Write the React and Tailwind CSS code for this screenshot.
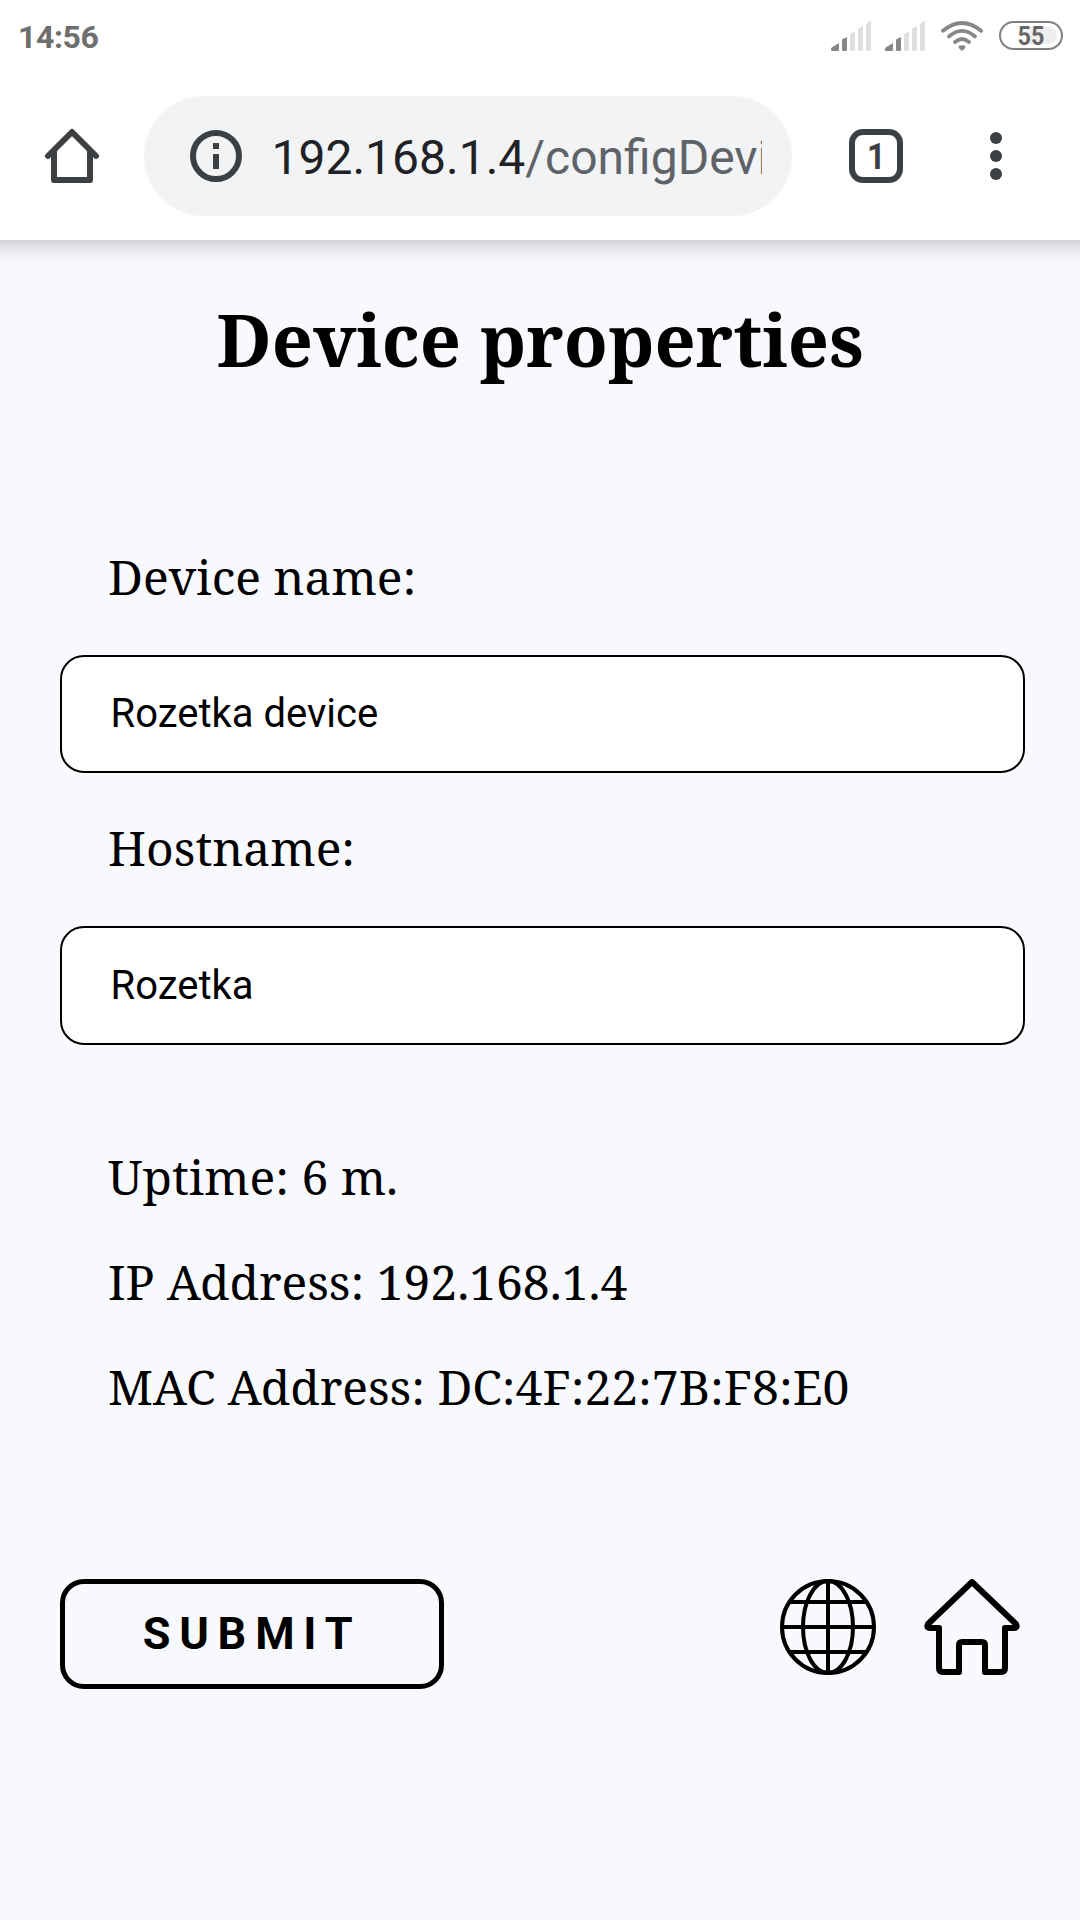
const serif = "font-['Noto_Serif','Droid_Serif','DejaVu_Serif',serif]";

function Signal() {
  return (
    <svg className="h-[30px] w-[41px]" viewBox="0 0 41 30">
      <path d="M0 29V27L8 22V29Q8 30 7 30H1Q0 30 0 29Z" fill="#878787" />
      <path d="M11 18.500L16 16V29Q16 30 15 30H12Q11 30 11 29Z" fill="#878787" />
      <path d="M19 13L24 10.500V29Q24 30 23 30H20Q19 30 19 29Z" fill="#dfdfdf" />
      <path d="M27 8L32 5V29Q32 30 31 30H28Q27 30 27 29Z" fill="#dfdfdf" />
      <path d="M35 3.500Q36 1 40 0V29Q40 30 39 30H36Q35 30 35 29Z" fill="#dfdfdf" />
    </svg>
  );
}

function Wifi() {
  return (
    <svg className="h-[30px] w-[42px]" viewBox="0 0 42 30" fill="none" stroke="#878787" strokeWidth="3.800" strokeLinecap="round">
      <path d="M2 9.800Q21 -5.800 40 9.800" />
      <path d="M8 15.500Q21 4.300 34 15.500" />
      <path d="M14 21Q21 14.800 28 21" />
      <path d="M17.200 25.500Q21 22.800 24.800 25.500Q24 28 21 30Q18 28 17.200 25.500Z" fill="#878787" stroke="none" />
    </svg>
  );
}

function StatusBar() {
  return (
    <div className="flex h-[72px] items-start justify-between pl-[18px] pr-[17px] font-[Roboto,sans-serif]">
      <span className="pt-[18px] text-[32px] leading-[38px] font-bold tracking-[-0.4px] text-[#6e6e6e]">14:56</span>
      <div className="flex pt-[21px]">
        <Signal />
        <div className="w-[13px]" />
        <Signal />
        <div className="w-[15px]" />
        <Wifi />
        <div className="w-[16px]" />
        <div className="relative flex h-[29px] w-[64px] items-center justify-center rounded-full border-2 border-[#808080]">
          <div className="absolute top-[4px] right-[4px] bottom-[4px] left-[4px] rounded-full bg-gradient-to-r from-white from-40% to-[#eeeeee] to-40%" />
          <span className="relative scale-x-90 text-[26px] leading-[26px] font-bold text-[#666666]">55</span>
        </div>
      </div>
    </div>
  );
}

function Toolbar() {
  return (
    <div className="flex h-[168px] items-center font-[Roboto,sans-serif]">
      <svg className="ml-[36px] h-[72px] w-[72px]" viewBox="0 0 72 72" fill="none" stroke="#3c4043" strokeWidth="6" strokeLinecap="round" strokeLinejoin="round">
        <path d="M12 36L36 12L60 36M18 32V60H54V32" />
      </svg>
      <div className="ml-[36px] flex h-[120px] w-[648px] items-center rounded-full bg-[#f1f3f4] pl-[46px]">
        <svg className="h-[52px] w-[52px]" viewBox="0 0 52 52">
          <circle cx="26" cy="26" r="23" fill="none" stroke="#3c4043" strokeWidth="6" />
          <path d="M23 13h6v6h-6zM23 24h6v15h-6z" fill="#3c4043" />
        </svg>
        <div className="ml-[28px] w-[492px] overflow-hidden pt-[3px] pl-[1.5px] text-[48px] leading-[60px] whitespace-nowrap text-[#202124]">
          192.168.1.4<span className="text-[#5f6368]">/configDevice</span>
        </div>
      </div>
      <div className="ml-[57px] flex h-[54px] w-[54px] items-center justify-center rounded-[14px] border-[6px] border-[#3c4043] text-[36px] leading-[42px] font-bold text-[#3c4043]">
        <span className="scale-x-90 pt-[2px]">1</span>
      </div>
      <div className="ml-[87px] flex flex-col gap-[6px]">
        <i className="size-[12px] rounded-full bg-[#3c4043]" />
        <i className="size-[12px] rounded-full bg-[#3c4043]" />
        <i className="size-[12px] rounded-full bg-[#3c4043]" />
      </div>
    </div>
  );
}

function Field({ label, value, size }) {
  return (
    <label className="block h-[271px]">
      <span className="block pl-[48px] text-[48px] leading-[64px]">{label}</span>
      <input
        className={
          "mt-[46px] block w-[965px] rounded-[24px] border-2 border-black bg-white pl-[48.5px] font-[Roboto,sans-serif] text-[40px] text-black " +
          size
        }
        defaultValue={value}
      />
    </label>
  );
}

function Globe() {
  return (
    <svg className="h-[96px] w-[96px]" viewBox="0 0 96 96" fill="none" stroke="#000" strokeWidth="4">
      <circle cx="48" cy="48" r="46" />
      <ellipse cx="48" cy="48" rx="25" ry="46" />
      <path d="M48 2V94M2 48H94M10 23H86M10 73H86" />
    </svg>
  );
}

function House() {
  return (
    <svg className="h-[96px] w-[96px]" viewBox="0 0 96 96" fill="none" stroke="#000" strokeWidth="6" strokeLinejoin="round">
      <path d="M48 3L4 45Q2 49 6 49H15V89Q15 93 19 93H35V66Q35 63 38 63H58Q61 63 61 66V93H77Q81 93 81 89V49H90Q94 49 92 45Z" />
    </svg>
  );
}

export default function App() {
  return (
    <div className="h-[1920px] w-[1080px] overflow-hidden bg-[#f8f9fd] text-black">
      <div className="bg-white">
        <StatusBar />
        <Toolbar />
      </div>
      <div className="h-[24px] bg-gradient-to-b from-[#d2d3d7] via-[#ebecf0] to-[#f8f9fd]" />
      <main className={serif}>
        <h1 className="mt-[26px] text-center text-[72px] leading-[98px] font-bold">Device properties</h1>
        <form className="mt-[157px] ml-[60px]">
          <Field label="Device name:" value="Rozetka device" size="h-[118px] pb-[2px]" />
          <Field label="Hostname:" value="Rozetka" size="h-[119px] pb-px" />
        </form>
        <div className="mt-[37px] ml-[108px] text-[48px] leading-[105px]">
          <p>Uptime: 6 m.</p>
          <p>IP Address: 192.168.1.4</p>
          <p>MAC Address: DC:4F:22:7B:F8:E0</p>
        </div>
        <div className="mt-[140px] flex pl-[60px]">
          <button className="h-[110px] w-[384px] rounded-[24px] border-[5px] border-black font-[Roboto,sans-serif] text-[45px] font-bold tracking-[8.8px]">
            SUBMIT
          </button>
          <div className="ml-[336px] flex gap-[48px]">
            <Globe />
            <House />
          </div>
        </div>
      </main>
    </div>
  );
}
